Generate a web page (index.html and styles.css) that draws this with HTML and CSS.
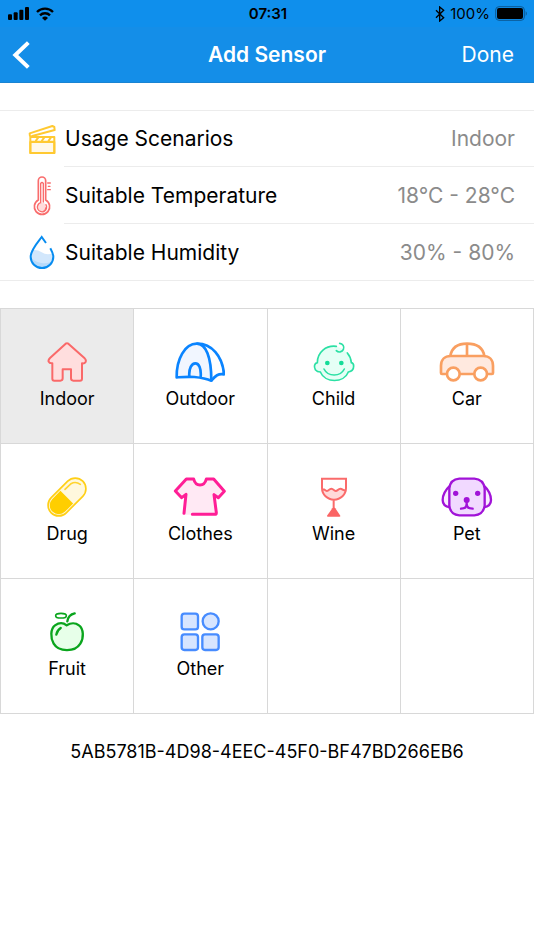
FILE: index.html
```html
<!DOCTYPE html>
<html lang="en">
<head>
<meta charset="utf-8">
<meta name="viewport" content="width=device-width, initial-scale=1">
<title>Add Sensor</title>
<link rel="stylesheet" href="styles.css">
</head>
<body>
<div class="status">
  <div class="status-side">
    <svg width="22" height="14" viewBox="0 0 66 42" aria-hidden="true"><rect x="0" y="22" width="12" height="17" rx="3"/><rect x="17" y="16" width="12" height="23" rx="3"/><rect x="34" y="8" width="12" height="31" rx="3"/><rect x="51" y="0" width="12" height="39" rx="3"/></svg>
    <svg class="wifi" width="18" height="14" viewBox="0 0 54 42" aria-hidden="true"><g fill="none" stroke="#000" stroke-width="7"><path d="M3 15a34 34 0 0 1 48 0"/><path d="M12 25a21 21 0 0 1 30 0"/></g><path d="M18 33a13 13 0 0 1 18 0l-9 8z"/></svg>
  </div>
  <time class="clock">07:31</time>
  <div class="status-side status-right">
    <svg width="10" height="16" viewBox="0 0 30 48" fill="none" stroke="#000" stroke-width="4" aria-hidden="true"><path d="M3 13l23 22-12 10V3l12 10L3 35"/></svg>
    <span>100%</span>
    <svg width="33" height="15" viewBox="0 0 99 45" aria-hidden="true"><rect x="2" y="2" width="86" height="41" rx="10" fill="none" stroke="#0b5a96" stroke-width="3"/><rect x="6" y="6" width="78" height="33" rx="6"/><path d="M92 15q7 7 0 15z" fill="#0b5a96"/></svg>
  </div>
</div>
<header class="nav">
  <button class="back" aria-label="Back"><svg width="18" height="28" viewBox="0 0 54 84" fill="none" stroke="#fff" stroke-width="12" aria-hidden="true"><path d="M49 5L10 42l39 37"/></svg></button>
  <h1>Add Sensor</h1>
  <button class="done">Done</button>
</header>
<main>
  <dl class="settings">
    <div class="row">
      <svg class="row-icon" width="28" height="40" viewBox="84 54 84 120" fill="none" stroke="#ffc931" stroke-width="6" stroke-linejoin="round" aria-hidden="true"><path d="M91 123h72v33H91z" fill="#fff8e8"/><path d="M91 108h72v48H91zM91 122h72M90 106l-1-9 68-22 6 3 1 9-70 19M107 120l8-11M125 120l8-11M145 120l8-11"/></svg>
      <div class="row-body"><dt>Usage Scenarios</dt><dd>Indoor</dd></div>
    </div>
    <div class="row">
      <svg class="row-icon" width="28" height="40" viewBox="84 226 84 120" fill="none" stroke="#f96d6d" stroke-width="4" stroke-linecap="round" aria-hidden="true"><path d="M115 298v-58a11 11 0 0 1 22 0v58a23 23 0 1 1-22 0z" stroke-width="5"/><circle cx="126" cy="320" r="14" fill="#ffdcdc" stroke="none"/><path d="M138 312a14 14 0 1 1-16-6v-58q4-5 8 0v56M138 321q-1 9-9 12M143 247h8M145 257h5M143 267h8"/></svg>
      <div class="row-body"><dt>Suitable Temperature</dt><dd>18°C - 28°C</dd></div>
    </div>
    <div class="row">
      <svg class="row-icon" width="28" height="40" viewBox="84 396 84 120" fill="none" aria-hidden="true"><path d="M94 451q17-4 31 6t35 3c4 27-14 43-34 43-22 0-37-20-34-40z" fill="#d2e7fc"/><path d="M93 475q17 14 37 15t29-9c-5 15-19 22-33 22-16 0-29-10-33-28z" fill="#b8dafa"/><path d="M138 429l-13-18c-13 17-33 39-33 59a34 34 0 0 0 68 0c0-9-4-16-9-25" stroke="#078cf0" stroke-width="6"/></svg>
      <div class="row-body"><dt>Suitable Humidity</dt><dd>30% - 80%</dd></div>
    </div>
  </dl>
  <div class="grid">
    <button class="tile" aria-pressed="true"><svg width="42" height="40" viewBox="139 127 126 120" fill="#ffdede" stroke="#fa6969" stroke-width="6" stroke-linejoin="round" aria-hidden="true"><path d="M198 132q4-3 8 0l49 44q6 6 2 12-3 4-9 3h-1v46q0 6-6 6h-20q-7 0-7-7v-27h-25v27q0 7-7 7h-18q-6 0-6-6v-46h-2q-7 0-9-5t4-11z"/></svg>Indoor</button>
    <button class="tile"><svg width="50" height="40" viewBox="125 127 150 120" fill="none" stroke="#0a84ff" stroke-width="8" stroke-linejoin="round" aria-hidden="true"><path d="M130 233c-1-55 25-101 60-101 28 0 44 40 44 111-14-6-30-9-51-11-22-1-35 0-53 1z" fill="#f1f6ff"/><path d="M190 132c45-1 78 38 82 92-17-3-26 4-38 19M168 230c-2-24 7-39 18-39s18 15 16 41"/></svg>Outdoor</button>
    <button class="tile"><svg width="42" height="40" viewBox="137 127 126 120" fill="none" stroke="#2be0a4" stroke-width="5" stroke-linecap="round" aria-hidden="true"><path d="M207 140c-31-4-57 18-57 49-9 2-11 11-6 21 4 5 9 7 15 7 14 34 71 34 84 0 12-2 16-10 16-18 0-6-3-9-7-10-1-12-5-21-12-29l-15-13z" fill="#e5fff6" stroke="none"/><path d="M207 140c-31-4-57 18-57 49-9 2-11 11-6 21 4 5 9 7 15 7 14 34 71 34 84 0 12-2 16-10 16-18 0-6-3-9-7-10-1-12-5-21-12-29M170 208c12 24 49 24 61 0M207 153a13 13 0 1 0 10-22"/><g fill="#13dc98" stroke="none"><circle cx="180" cy="190" r="7"/><circle cx="222" cy="190" r="7"/></g></svg>Child</button>
    <button class="tile"><svg width="56" height="40" viewBox="514 127 168 120" fill="none" stroke="#f99f61" stroke-width="8" stroke-linejoin="round" aria-hidden="true"><path d="M548 169c4-23 18-37 50-37s48 14 52 37"/><path d="M520 220v-22c0-17 11-29 29-29h98c18 0 29 12 29 29v22q0 3-3 3H523q-3 0-3-3z" fill="#ffe9df"/><path d="M598 132v37"/><g fill="#fff"><circle cx="557" cy="223" r="19"/><circle cx="639" cy="223" r="19"/></g></svg>Car</button>
    <button class="tile"><svg width="42" height="40" viewBox="139 112 126 120" aria-hidden="true"><g transform="rotate(45 202 172)"><rect x="170" y="105" width="64" height="134" rx="32" fill="#fff8dd" stroke="#ffcf16" stroke-width="5"/><path d="M175 173h54v34a27 27 0 0 1-54 0z" fill="#ffce00"/></g><path d="M196 149l18-17q14-8 28 2" fill="none" stroke="#ffd42e" stroke-width="5" stroke-linecap="round"/></svg>Drug</button>
    <button class="tile"><svg width="54" height="40" viewBox="522 112 162 120" fill="none" stroke="#ff1e96" stroke-width="9" stroke-linecap="round" stroke-linejoin="round" aria-hidden="true"><path d="M561 117h23c6 24 32 24 38 0h22l32 37-16 18-14-5 9 58h-99l6-57-15 6-17-20z" fill="#ffe9f4" stroke="none"/><path d="M555 221l6-57-13 10-19-20 33-36h22c6 24 32 24 38 0h22l32 37-18 19-13-9 7 54q0 5-5 5h-67"/></svg>Clothes</button>
    <button class="tile"><svg width="28" height="40" viewBox="159 112 84 120" fill="none" stroke="#fa6b6b" stroke-width="6" aria-hidden="true"><path d="M167 149q6 0 13 5 6-7 13-7t13 7q6-7 14-7 7 0 16 7c-6 36-62 36-70-5z" fill="#ffdada" stroke="none"/><path d="M165 117h72v28a36 35 0 0 1-72 0zM168 149c6 0 8 5 12 5 6 0 6-7 13-7s7 7 13 7 7-7 14-7 8 7 14 4M200 181v28"/><path d="M196 206q5-5 9 0l15 22q1 3-3 3h-34q-4 0-3-3z" fill="#fa6464" stroke="none"/></svg>Wine</button>
    <button class="tile"><svg width="52" height="40" viewBox="521 112 156 120" fill="none" stroke="#a113d8" stroke-width="7" aria-hidden="true"><path d="M549 137c-13 12-23 30-23 44 0 11 8 20 22 22zM649 137c13 12 22 30 22 44 0 11-8 20-22 22z" fill="#f8ecff"/><path d="M576 117h45q27 2 31 29v52q-4 27-31 29h-45q-27-2-30-29v-52q3-27 30-29z" fill="#f1d9ff"/><path d="M598 180v12c0 9-6 15-17 15M598 192c0 9 7 15 18 15" stroke-linecap="round"/><g fill="#a113d8" stroke="none"><circle cx="565" cy="161" r="8"/><circle cx="631" cy="161" r="8"/><circle cx="598" cy="181" r="9"/></g></svg>Pet</button>
    <button class="tile"><svg width="36" height="40" viewBox="148 112 108 120" fill="none" stroke="#0aa51d" stroke-width="7" stroke-linecap="round" aria-hidden="true"><path d="M201 152c-11-9-25-7-35 0-14 10-14 38-4 55 15 25 63 27 80 0 11-17 10-45-4-55-10-8-25-8-37 0z" fill="#e7ffe9" stroke-linejoin="round"/><path d="M203 140q3-20 22-24M170 180q2-13 13-20"/><ellipse cx="184" cy="123" rx="16" ry="7" stroke-width="5"/></svg>Fruit</button>
    <button class="tile"><svg width="40" height="40" viewBox="541 112 120 120" fill="#d7e5ff" stroke="#478cff" stroke-width="7" aria-hidden="true"><rect x="546" y="117" width="49" height="47" rx="8"/><circle cx="633" cy="140" r="24"/><rect x="546" y="179" width="49" height="47" rx="8"/><rect x="608" y="179" width="49" height="47" rx="8"/></svg>Other</button>
    <div class="tile"></div>
    <div class="tile"></div>
  </div>
  <p class="uuid">5AB5781B-4D98-4EEC-45F0-BF47BD266EB6</p>
</main>
</body>
</html>
```
FILE: styles.css
```css
* {
  box-sizing: border-box;
}

body {
  margin: 0;
  background: #fff;
  color: #000;
  font-family: Inter, "Liberation Sans", sans-serif;
}

svg {
  display: block;
  flex: none;
}

button {
  border: 0;
  padding: 0;
  background: none;
  color: inherit;
  font: inherit;
}

.status {
  display: grid;
  grid-template-columns: 1fr auto 1fr;
  align-items: center;
  height: 27px;
  padding: 0 6px 0 8px;
  background: #0f8fec;
  font-size: 15px;
}

.status-side {
  display: flex;
  align-items: center;
  gap: 6px;
}

.status-right {
  justify-content: flex-end;
  gap: 5px;
}

.clock {
  font-weight: 600;
}

.nav {
  display: grid;
  grid-template-columns: 1fr auto 1fr;
  align-items: center;
  height: 56px;
  padding: 0 20px 0 12px;
  border-bottom: 1px solid #1a84d2;
  background: #148ee8;
  color: #fff;
}

.nav {
  padding: 0 20px;
}

.nav h1 {
  margin: 0;
  font-size: 21px;
  font-weight: 600;
}

.back {
  justify-self: start;
  margin-left: -8px;
}

.done {
  justify-self: end;
  font-size: 21px;
}

.settings {
  margin: 27px 0;
  border-top: 1px solid #ececec;
  border-bottom: 1px solid #ececec;
}

.row {
  display: flex;
  align-items: center;
  padding-left: 28px;
}

.row-icon {
  margin-right: 8px;
}

.row-body {
  display: flex;
  flex: 1;
  align-items: center;
  justify-content: space-between;
  height: 57px;
  padding: 0 19px 0 1px;
  border-bottom: 1px solid #ececec;
  font-size: 21px;
}

.row:first-child .row-body,
.row:last-child .row-body {
  height: 56px;
}

.row:last-child .row-body {
  border-bottom: 0;
}

.row dd {
  margin: 0;
  color: #8b8b8b;
}

.grid {
  display: grid;
  grid-template-columns: repeat(4, 1fr);
  grid-auto-rows: 134px;
  gap: 1px;
  padding: 1px;
  background: #d8d8d8;
}

.tile {
  display: flex;
  flex-direction: column;
  align-items: center;
  gap: 5px;
  padding-top: 33px;
  background: #fff;
  font-size: 18px;
  line-height: 24px;
}

.tile[aria-pressed="true"] {
  background: #ebebeb;
}

.uuid {
  margin: 26px 0;
  font-size: 18px;
  line-height: 24px;
  text-align: center;
}
```
